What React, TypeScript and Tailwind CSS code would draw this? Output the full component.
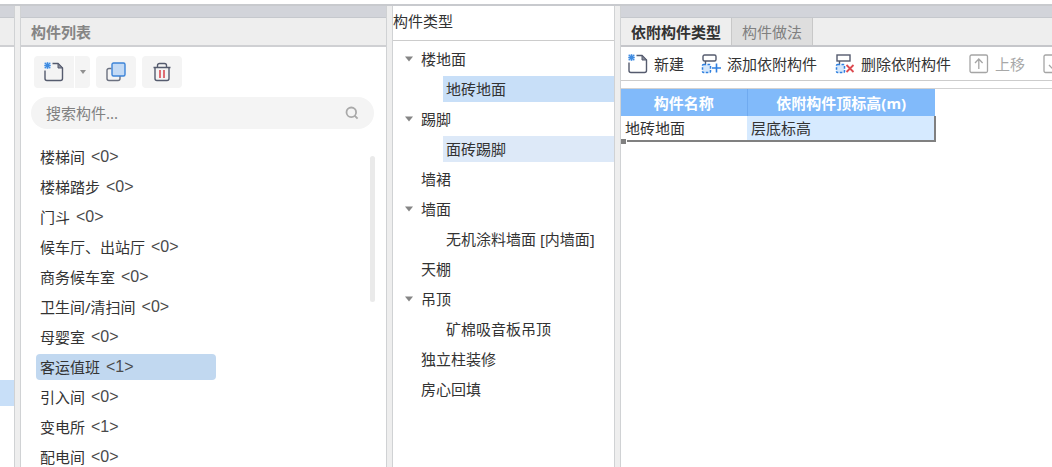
import { useState } from "react";
import clsx from "clsx";

const components = [
    { name: "楼梯间", count: 0 },
    { name: "楼梯踏步", count: 0 },
    { name: "门斗", count: 0 },
    { name: "候车厅、出站厅", count: 0 },
    { name: "商务候车室", count: 0 },
    { name: "卫生间/清扫间", count: 0 },
    { name: "母婴室", count: 0 },
    { name: "客运值班", count: 1 },
    { name: "引入间", count: 0 },
    { name: "变电所", count: 1 },
    { name: "配电间", count: 0 },
];

const tree = [
    { name: "楼地面", children: ["地砖地面"] },
    { name: "踢脚", children: ["面砖踢脚"] },
    { name: "墙裙", children: [] },
    { name: "墙面", children: ["无机涂料墙面 [内墙面]"] },
    { name: "天棚", children: [] },
    { name: "吊顶", children: ["矿棉吸音板吊顶"] },
    { name: "独立柱装修", children: [] },
    { name: "房心回填", children: [] },
];

function NewIcon() {
    return (
        <svg width="20" height="20" viewBox="0 0 20 20" fill="none" className="shrink-0">
            <path d="M1 8.5v8a2 2 0 0 0 2 2h13.5a2 2 0 0 0 2-2V6L14 1.500H8.500" stroke="#555b6e" strokeWidth="1.4" />
            <path d="M14 1.500V6h4.500z" fill="#8a8e9b" stroke="#555b6e" strokeWidth="1" />
            <rect x="0.500" y="0.500" width="6" height="6" fill="#a5cbf5" />
            <path d="M3.500 0.300v6.400M0.300 3.500h6.400M0.800 0.800l5.400 5.400M6.200 0.800L0.800 6.200" stroke="#3f8be0" strokeWidth="1.2" />
        </svg>
    );
}

function CopyIcon() {
    return (
        <svg width="20" height="20" viewBox="0 0 20 20" fill="none">
            <path d="M5.500 6.500H3a2 2 0 0 0-2 2v8a2 2 0 0 0 2 2h9a2 2 0 0 0 2-2V14" stroke="#6b707f" strokeWidth="1.4" />
            <rect x="6" y="1" width="13" height="13" rx="1.500" fill="#c3daf5" stroke="#3d84d8" strokeWidth="1.4" />
        </svg>
    );
}

function TrashIcon() {
    return (
        <svg width="20" height="20" viewBox="0 0 20 20" fill="none">
            <path
                d="M1.500 5.500h17M5.500 5V3.500A2 2 0 0 1 7.500 1.500h5a2 2 0 0 1 2 2V5M3 5.500v11a2 2 0 0 0 2 2h10a2 2 0 0 0 2-2v-11"
                stroke="#555b6e"
                strokeWidth="1.4"
            />
            <path d="M8 8v8M12 8v8" stroke="#d8343c" strokeWidth="1.4" />
        </svg>
    );
}

function AttachIcon({ remove = false }: { remove?: boolean }) {
    return (
        <svg width="20" height="20" viewBox="0 0 20 20" fill="none" className="shrink-0">
            <rect x="2" y="1" width="13" height="6" rx={remove ? 0 : 1.5} stroke="#555b6e" strokeWidth="1.4" />
            <path d="M4.500 7v3" stroke="#555b6e" strokeWidth="1.4" />
            <rect x="1.500" y="10.500" width="8" height="8" rx="1" fill="#d5e7fb" stroke="#2f80e0" strokeWidth="1.5" strokeDasharray="2.6 1.4" />
            {remove ? (
                <path d="M11.500 11l7 7M18.500 11l-7 7" stroke="#dc4a50" strokeWidth="1.8" />
            ) : (
                <path d="M15.500 9.500v9M11 14h9" stroke="#2f7fe0" strokeWidth="1.6" />
            )}
        </svg>
    );
}

function MoveIcon({ down = false }: { down?: boolean }) {
    return (
        <svg width="20" height="20" viewBox="0 0 20 20" fill="none" className="shrink-0">
            <rect x="1" y="1" width="17.5" height="17.5" rx="1.5" stroke="#a5a5a5" strokeWidth="1.3" />
            <path
                d={down ? "M9.8 5v10M6 11l3.8 4L13.6 11" : "M9.8 15V5M6 9l3.8-4L13.6 9"}
                stroke="#a5a5a5"
                strokeWidth="1.3"
            />
        </svg>
    );
}

function Caret() {
    return (
        <svg width="8" height="6" viewBox="0 0 8 6">
            <path d="M0 0.5h8L4 5.5z" fill="#858585" />
        </svg>
    );
}

function Splitter() {
    return <div className="w-[7px] shrink-0 border-x border-[#d0d2d4] bg-[#eeeeee]" />;
}

function ComponentList() {
    const [selected, setSelected] = useState("客运值班");
    const [query, setQuery] = useState("");

    return (
        <section className="flex w-[365px] shrink-0 flex-col">
            <div className="h-3 shrink-0 border-b border-[#c5c8cd] bg-[#d2d4da]" />
            <h2 className="flex h-[29px] shrink-0 items-center border-b-2 border-[#cfd0d3] bg-[#eeeeee] px-[10px] font-bold text-[#858585]">
                构件列表
            </h2>

            <div className="flex shrink-0 px-[13px] pt-[9px]">
                <button aria-label="新建" className="flex h-8 w-10 items-center justify-center rounded-l-sm bg-[#f4f4f4]">
                    <NewIcon />
                </button>
                <button aria-label="更多" className="ml-px flex h-8 w-[15px] items-center justify-center rounded-r-sm bg-[#f4f4f4]">
                    <svg width="6" height="4" viewBox="0 0 6 4">
                        <path d="M0 0h6L3 4z" fill="#909090" />
                    </svg>
                </button>
                <button aria-label="复制" className="ml-[6px] flex h-8 w-10 items-center justify-center rounded-sm bg-[#f4f4f4]">
                    <CopyIcon />
                </button>
                <button aria-label="删除" className="ml-[6px] flex h-8 w-10 items-center justify-center rounded-sm bg-[#f4f4f4]">
                    <TrashIcon />
                </button>
            </div>

            <label className="mt-[9px] mr-3 ml-[10px] flex h-8 shrink-0 items-center rounded-full bg-[#f4f4f4] px-[15px]">
                <input
                    value={query}
                    onChange={(e) => setQuery(e.target.value)}
                    aria-label="搜索构件"
                    placeholder="搜索构件..."
                    className="min-w-0 flex-1 bg-transparent outline-none placeholder:text-[#808080]"
                />
                <svg width="14" height="14" viewBox="0 0 14 14" fill="none" stroke="#a9a9a9" strokeWidth="1.8">
                    <circle cx="6.3" cy="6.3" r="4.8" />
                    <path d="M9.6 9.6l3 3" />
                </svg>
            </label>

            <div className="flex pt-[13px]">
                <ul className="flex-1 pl-[15px]">
                    {components
                        .filter((c) => c.name.includes(query))
                        .map((c) => (
                            <li key={c.name} className="flex h-[30px] items-center">
                                <button
                                    onClick={() => setSelected(c.name)}
                                    className={clsx(
                                        "flex h-[26px] w-[180px] items-center gap-[6px] rounded-sm pl-1 text-left whitespace-nowrap",
                                        selected === c.name && "bg-[#c1d8f0]"
                                    )}
                                >
                                    {c.name}
                                    <span className="font-['Liberation_Sans',sans-serif] text-base leading-5 text-[#4a4a4a]">
                                        &lt;{c.count}&gt;
                                    </span>
                                </button>
                            </li>
                        ))}
                </ul>
                <div className="mt-[14px] mr-[11px] h-[146px] w-[5px] rounded-full bg-[#eaeaea]" />
            </div>
        </section>
    );
}

function TypeTree() {
    const [selected, setSelected] = useState("地砖地面");

    return (
        <section className="flex w-[221px] shrink-0 flex-col">
            <h2 className="flex h-[34px] shrink-0 items-center pb-1">构件类型</h2>
            <ul className="flex-1 border-t border-[#cccccc] pt-[3px]">
                {tree.map((node) => (
                    <li key={node.name}>
                        <div className="flex h-[30px] items-center pl-3">
                            <span className="flex w-4">{node.children.length > 0 && <Caret />}</span>
                            {node.name}
                        </div>
                        {node.children.map((child) => (
                            <div key={child} className="flex h-[30px] items-center pl-[50px]">
                                <button
                                    onClick={() => setSelected(child)}
                                    className={clsx(
                                        "h-[26px] flex-1 pl-[3px] text-left whitespace-nowrap",
                                        selected === child && "bg-[#c8dff8]",
                                        selected !== child && child === "面砖踢脚" && "bg-[#dde9f8]"
                                    )}
                                >
                                    {child}
                                </button>
                            </div>
                        ))}
                    </li>
                ))}
            </ul>
        </section>
    );
}

function DetailPanel() {
    return (
        <section className="min-w-0 flex-1 overflow-hidden">
            <div className="h-3 border-b border-[#c5c8cd] bg-[#d2d4da]" />
            <div className="flex h-[29px] border-b-2 border-[#c5c6ca] bg-[#eeeeee]">
                <button className="border-r border-[#c8c8c8] px-[10px] font-bold">依附构件类型</button>
                <button className="border-r border-[#c8c8c8] bg-[#dedede] px-[10px] text-[#808080]">构件做法</button>
            </div>

            <div className="flex h-[34px] items-center border-b border-[#cccccc] pl-[7px] whitespace-nowrap">
                <button className="flex shrink-0 items-center gap-[6px]">
                    <NewIcon />
                    新建
                </button>
                <button className="ml-[17px] flex shrink-0 items-center gap-[6px]">
                    <AttachIcon />
                    添加依附构件
                </button>
                <button className="ml-[18px] flex shrink-0 items-center gap-[6px]">
                    <AttachIcon remove />
                    删除依附构件
                </button>
                <button disabled className="ml-[18px] flex shrink-0 items-center gap-[6px] text-[#a8a8a8]">
                    <MoveIcon />
                    上移
                </button>
                <button disabled aria-label="下移" className="ml-[18px] shrink-0">
                    <MoveIcon down />
                </button>
            </div>

            <div className="mt-[7px] border-t border-[#d2d2d2]">
                <div className="relative w-[315px] border-b-2 border-[#808080]">
                    <table className="w-full table-fixed border-collapse">
                        <thead>
                            <tr className="h-[27px] bg-[#81bafa] text-white">
                                <th className="w-[126px] border-r border-[#6faaf0] p-0">构件名称</th>
                                <th className="p-0">依附构件顶标高(m)</th>
                            </tr>
                        </thead>
                        <tbody>
                            <tr className="h-6">
                                <td className="p-0 pl-1">地砖地面</td>
                                <td className="border-r-2 border-[#808080] bg-[#d6eaff] p-0 pl-1">层底标高</td>
                            </tr>
                        </tbody>
                    </table>
                    {/* fill handle */}
                    <span className="absolute -bottom-1 left-0 size-[5px] bg-[#808080] ring-1 ring-white" />
                </div>
            </div>
        </section>
    );
}

export default function App() {
    return (
        <div className="flex h-screen flex-col overflow-hidden bg-white pt-1 font-['Noto_Sans','Noto_Sans_CJK_SC',sans-serif] text-[15px] leading-5 text-[#333333]">
            <div className="flex min-h-0 flex-1 border-t-2 border-[#c8cace]">
                <aside className="flex w-[14px] shrink-0 flex-col">
                    <div className="h-3 border-b border-[#c5c8cd] bg-[#d2d4da]" />
                    <div className="h-[29px] border-b-2 border-[#cfd0d3] bg-[#eeeeee]" />
                    <div className="mt-[333px] h-[26px] bg-[#c8dff8]" />
                </aside>
                <Splitter />
                <ComponentList />
                <Splitter />
                <TypeTree />
                <Splitter />
                <DetailPanel />
            </div>
        </div>
    );
}
